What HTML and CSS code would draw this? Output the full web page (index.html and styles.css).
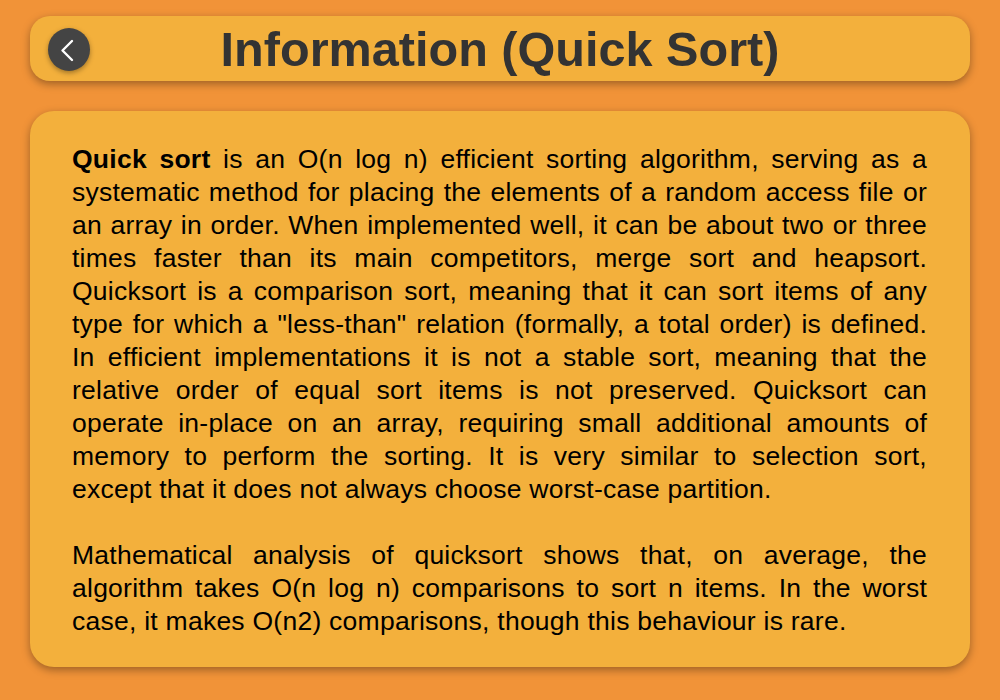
FILE: index.html
```html
<!DOCTYPE html>
<html lang="en">
  <head>
    <meta charset="UTF-8" />
    <title>Information (Quick Sort)</title>
    <link rel="stylesheet" href="styles.css">
  </head>
  <body>
    <header class="title-bar">
      <button class="back-btn" aria-label="Back">
        <svg width="42" height="42" viewBox="0 0 42 42">
          <path d="M24 12 L14.5 21.5 L24 31" fill="none" stroke="#fff" stroke-width="2.4" stroke-linecap="round" stroke-linejoin="round" />
        </svg>
      </button>
      <h1>Information (Quick Sort)</h1>
    </header>
    <main class="info-card">
      <p><strong>Quick sort</strong> is an O(n log n) efficient sorting algorithm, serving as a systematic method for placing the elements of a random access file or an array in order. When implemented well, it can be about two or three times faster than its main competitors, merge sort and heapsort. Quicksort is a comparison sort, meaning that it can sort items of any type for which a "less-than" relation (formally, a total order) is defined. In efficient implementations it is not a stable sort, meaning that the relative order of equal sort items is not preserved. Quicksort can operate in-place on an array, requiring small additional amounts of memory to perform the sorting. It is very similar to selection sort, except that it does not always choose worst-case partition.</p>
      <p>Mathematical analysis of quicksort shows that, on average, the algorithm takes O(n log n) comparisons to sort n items. In the worst case, it makes O(n2) comparisons, though this behaviour is rare.</p>
    </main>
  </body>
</html>
```
FILE: styles.css
```css
html {
  height: 100%;
}

body {
  height: 100%;
  box-sizing: border-box;
  margin: 0;
  padding: 16px 30px 34px;
  display: flex;
  flex-direction: column;
  gap: 30px;
  background-color: #f19338;
  font-family: "Liberation Sans", Arial, sans-serif;
  color: #000;
  overflow: hidden;
}

.title-bar {
  position: relative;
  height: 65px;
  flex-shrink: 0;
  display: flex;
  align-items: center;
  justify-content: center;
  background-color: #f3b03c;
  border-radius: 20px;
  box-shadow: 0 3px 8px rgba(0, 0, 0, 0.35);
}

.back-btn {
  position: absolute;
  left: 18px;
  top: 12px;
  width: 42px;
  height: 43px;
  padding: 0;
  border: none;
  border-radius: 50%;
  background-color: #444;
  box-shadow: 0 2px 5px rgba(0, 0, 0, 0.35);
}

.back-btn svg {
  display: block;
}

h1 {
  margin: 0;
  font-size: 48.6px;
  font-weight: bold;
  color: #333;
}

.info-card {
  flex: 1;
  padding: 32px 43px 29px 42px;
  background-color: #f3b03c;
  border-radius: 24px;
  box-shadow: 0 3px 8px rgba(0, 0, 0, 0.35);
}

.info-card p {
  margin: 0;
  font-size: 26.5px;
  line-height: 33px;
  letter-spacing: 0.25px;
  text-align: justify;
}

.info-card p + p {
  margin-top: 33px;
}
```
